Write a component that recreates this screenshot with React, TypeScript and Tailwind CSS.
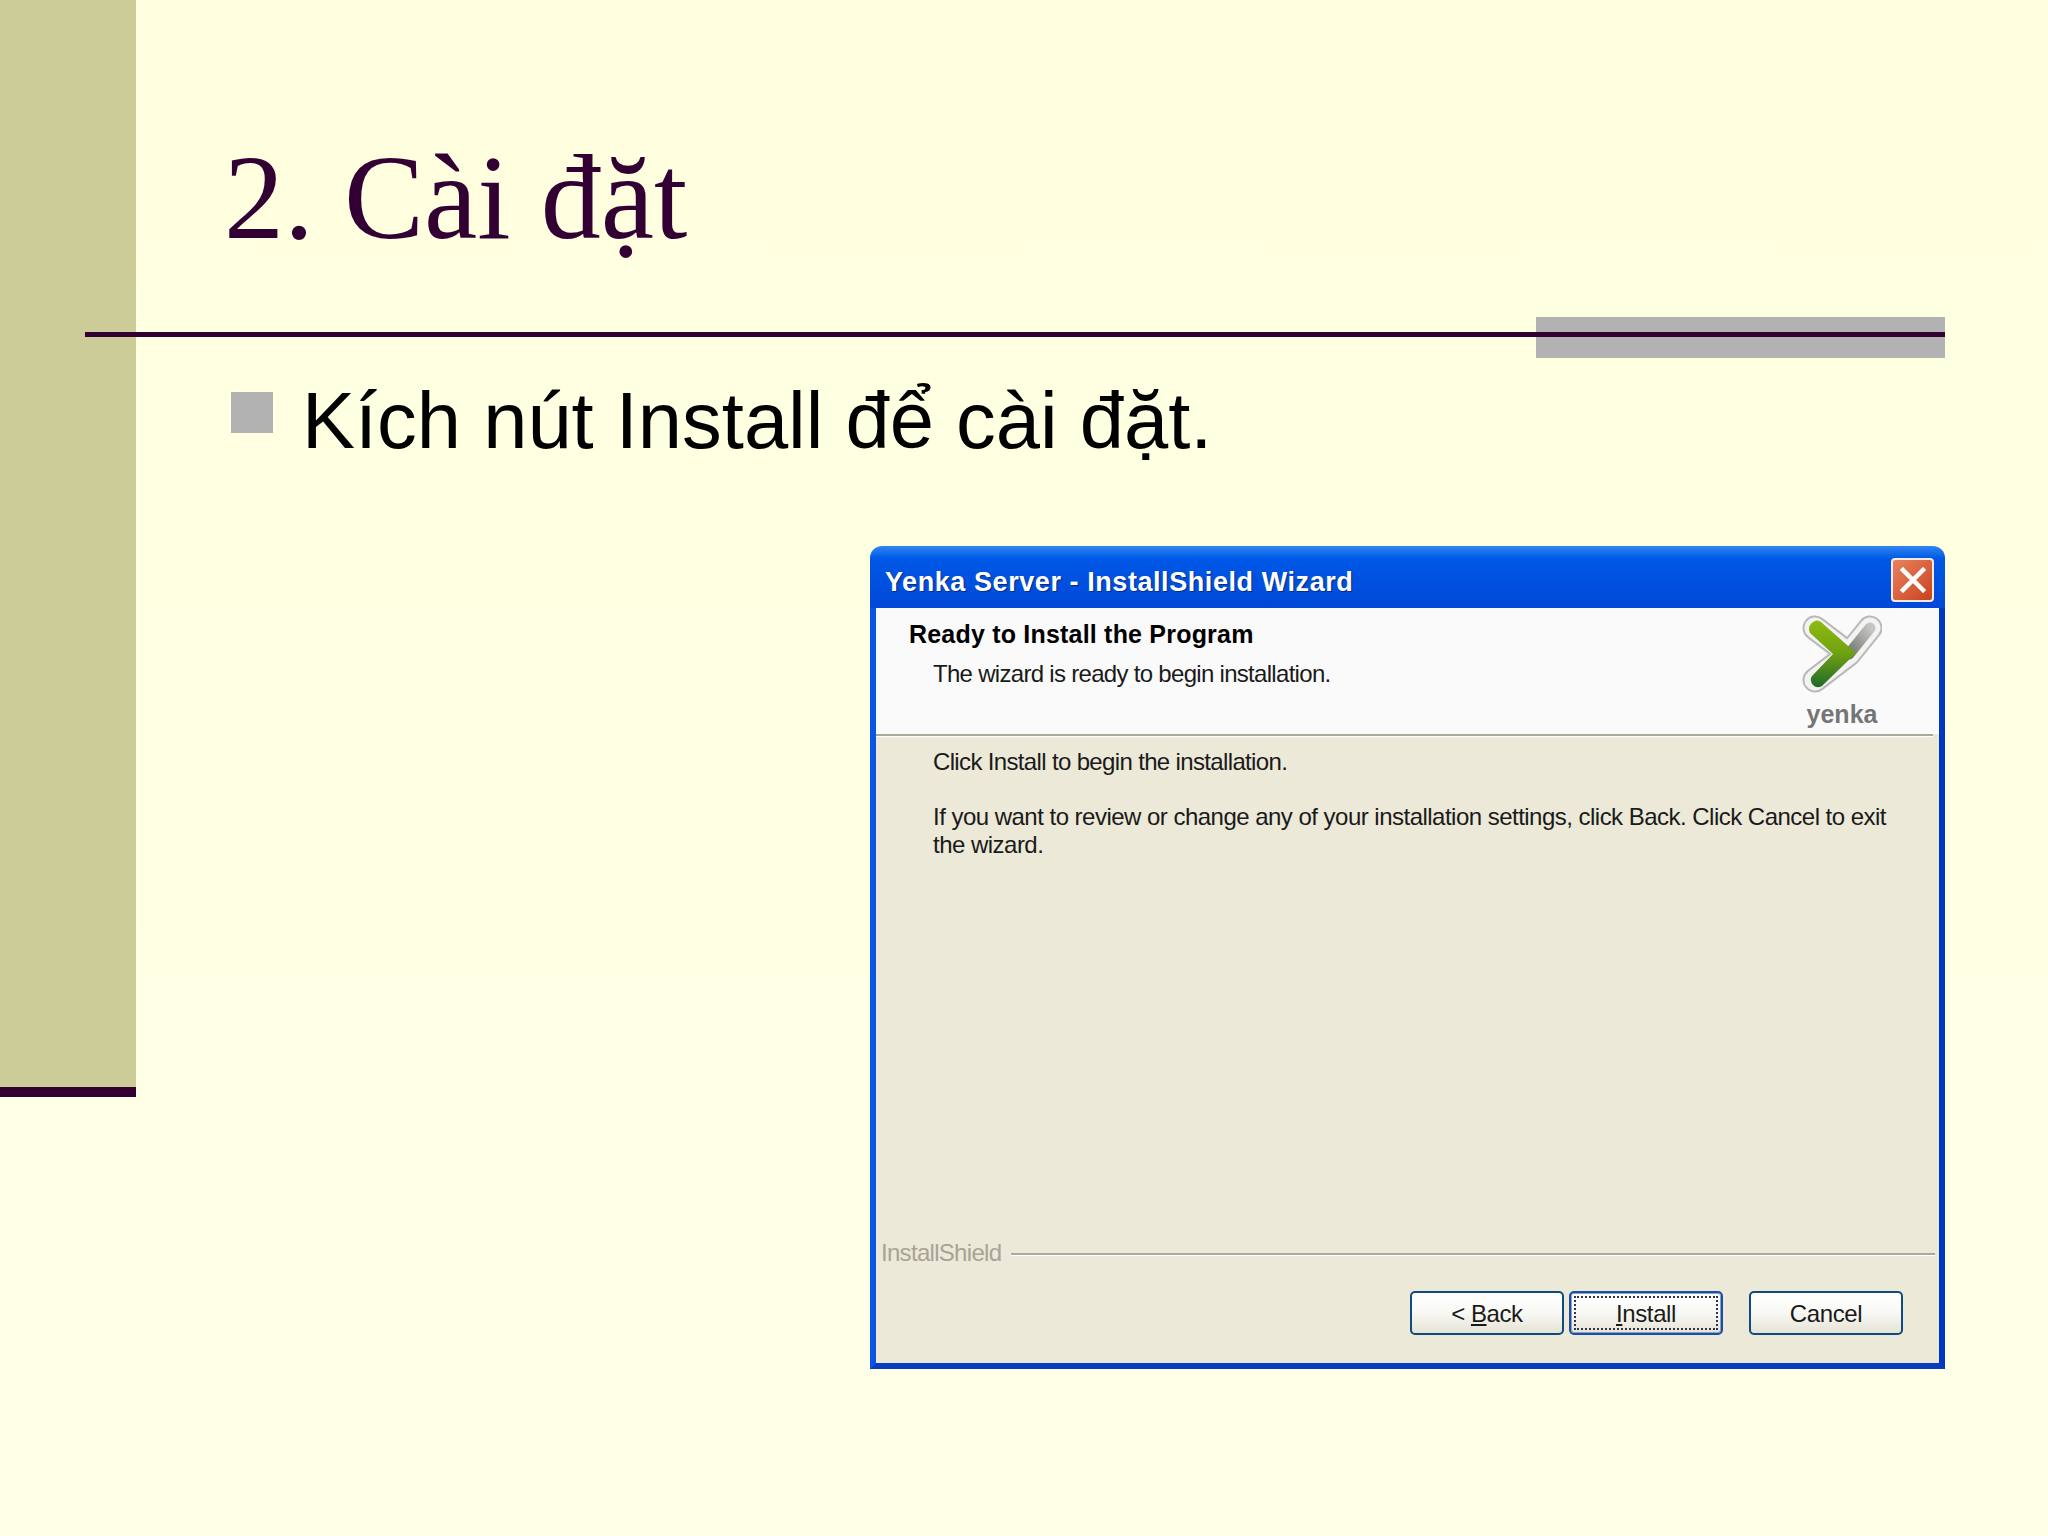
import React from 'react';

const YenkaLogo: React.FC = () => (
  <svg width="80" height="80" viewBox="0 0 80 80" className="block">
    <defs>
      <linearGradient id="yenkaGreen" x1="0" y1="0" x2="0" y2="1">
        <stop offset="0" stopColor="#8fbb10" />
        <stop offset="0.5" stopColor="#6fa012" />
        <stop offset="1" stopColor="#1f6a2a" />
      </linearGradient>
      <linearGradient id="yenkaGrey" x1="0" y1="1" x2="1" y2="0">
        <stop offset="0" stopColor="#6f776a" />
        <stop offset="1" stopColor="#c4c4c4" />
      </linearGradient>
    </defs>
    <g fill="none" strokeLinecap="round" strokeLinejoin="round">
      <path d="M13 14 L47 40 L13 66 M47 40 L68 14" stroke="#b9b9b9" strokeWidth="25" />
      <path d="M13 14 L47 40 L13 66 M47 40 L68 14" stroke="#f3f3f3" strokeWidth="21" />
      <path d="M47 40 L68 14" stroke="url(#yenkaGrey)" strokeWidth="11" />
    </g>
    <path
      d="M11 8 Q15 5 19 8 L54 39 L20 72 Q15 75 11 71 Q7 66 10 62 L31 40 L8 19 Q5 12 11 8 Z"
      fill="url(#yenkaGreen)"
    />
  </svg>
);

const WizardButton: React.FC<{ focused?: boolean; className?: string; children: React.ReactNode }> = ({
  focused,
  className,
  children,
}) => (
  <button
    className={
      'h-[44px] w-[154px] rounded-[5px] border-2 border-[#0f4a80] bg-gradient-to-b from-[#ffffff] via-[#f8f8f4] to-[#e6e3d6] p-[3px] text-[24px] tracking-[-0.4px] text-[#1a1a1a] ' +
      (focused ? 'border-[#1f4f9a] shadow-[inset_0_0_0_1px_#7fa4dc] ' : '') +
      (className ?? '')
    }
  >
    <span
      className={
        'flex h-full w-full items-center justify-center pt-[2px] leading-none ' +
        (focused ? 'border-2 border-dotted border-[#333344]' : '')
      }
    >
      {children}
    </span>
  </button>
);

export default function App() {
  return (
    <div className="flex h-[1536px] w-[2048px] overflow-hidden bg-gradient-to-b from-[#ffffdf] to-[#ffffe8]">
      <div className="flex h-[1097px] w-[136px] shrink-0 flex-col">
        <div className="flex-1 bg-[#cccc99]" />
        <div className="h-[10px] bg-[#330033]" />
      </div>

      <div className="flex min-w-0 flex-1 flex-col">
        <h1 className="ml-[88px] mt-[138px] font-['Liberation_Serif',serif] text-[120px] font-normal leading-none text-[#330033]">
          2. Cài đặt
        </h1>

        <div className="relative -ml-[51px] mr-[103px] mt-[74px] h-[5px]">
          <div className="absolute -top-[15px] right-0 h-[41px] w-[409px] bg-[#b2b2b2]" />
          <div className="relative h-[5px] bg-[#330033]" />
        </div>

        <div className="ml-[95px] mt-[43px] flex items-start">
          <div className="mt-[12px] h-[41px] w-[42px] bg-[#b2b2b2]" />
          <p className="ml-[29px] mt-[1px] font-['Liberation_Sans',sans-serif] text-[79.5px] leading-[80px] text-black">
            Kích nút Install để cài đặt.
          </p>
        </div>

        <div className="mr-[103px] mt-[85px] flex h-[823px] w-[1075px] flex-col self-end font-['Liberation_Sans',sans-serif]">
          <div className="flex h-[62px] shrink-0 items-center justify-between rounded-t-[12px] bg-gradient-to-b from-[#2f86f0] via-[#0058e6] via-[20%] to-[#0048d8] pl-[15px] pr-[11px] pt-[6px]">
            <span className="mt-[4px] text-[27px] font-bold tracking-[0.57px] text-white [text-shadow:1px_1px_1px_#0a2a80]">
              Yenka Server - InstallShield Wizard
            </span>
            <div className="flex h-[44px] w-[43px] items-center justify-center rounded-[4px] border-2 border-[#f4ece4] bg-gradient-to-br from-[#e8825e] to-[#c9411c]">
              <svg width="26" height="26" viewBox="0 0 26 26">
                <path d="M3 3 L23 23 M23 3 L3 23" stroke="#ffffff" strokeWidth="4.5" strokeLinecap="square" />
              </svg>
            </div>
          </div>

          <div className="flex flex-1 flex-col border-b-[6px] border-l-[6px] border-r-[6px] border-b-[#0a3cc0] border-l-[#0b55e4] border-r-[#0038c4] bg-[#ece9d8]">
            <div className="flex h-[126px] shrink-0 justify-between bg-[#fbfafa]">
              <div className="pl-[33px] pt-[12px] text-[#1a1a1a]">
                <div className="text-[25px] font-bold leading-[28px] tracking-[0.2px] text-black">
                  Ready to Install the Program
                </div>
                <div className="ml-[24px] mt-[12px] text-[24px] leading-[28px] tracking-[-0.7px]">
                  The wizard is ready to begin installation.
                </div>
              </div>
              <div className="mr-[57px] flex w-[80px] flex-col items-center pt-[6px]">
                <YenkaLogo />
                <span className="mt-[5px] text-[25px] font-bold leading-[30px] text-[#757575]">yenka</span>
              </div>
            </div>
            <div className="mr-[6px] h-[3px] shrink-0 border-b border-white bg-[#a9a89e]" />

            <div className="flex flex-1 flex-col">
              <div className="pl-[57px] pr-[30px] pt-[11px] text-[24px] leading-[28px] text-[#1a1a1a]">
                <p className="tracking-[-0.65px]">Click Install to begin the installation.</p>
                <p className="mt-[27px] tracking-[-0.52px]">
                  If you want to review or change any of your installation settings, click Back. Click Cancel to exit the
                  wizard.
                </p>
              </div>

              <div className="mt-auto flex items-center pl-[5px] pr-[4px]">
                <span className="-mt-[2px] text-[24px] leading-[28px] tracking-[-0.7px] text-[#a6a496]">InstallShield</span>
                <div className="ml-[10px] h-[3px] flex-1 border-b border-white bg-[#aaa8a0]" />
              </div>

              <div className="mb-[28px] mt-[24px] flex pl-[534px]">
                <WizardButton>
                  &lt; <span className="ml-[6px] underline">B</span>ack
                </WizardButton>
                <WizardButton focused className="ml-[5px]">
                  <span className="underline">I</span>nstall
                </WizardButton>
                <WizardButton className="ml-[26px]">Cancel</WizardButton>
              </div>
            </div>
          </div>
        </div>
      </div>
    </div>
  );
}
